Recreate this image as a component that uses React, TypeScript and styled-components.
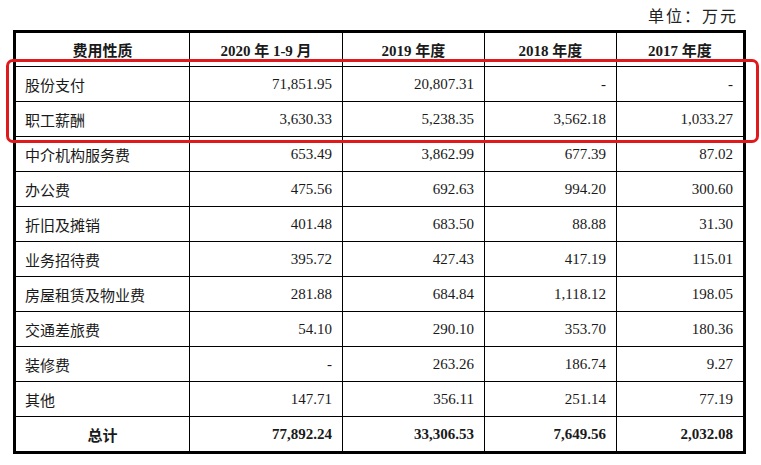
import React from 'react'
import styled, { createGlobalStyle } from 'styled-components'

const GlobalStyle = createGlobalStyle`
  html, body {
    margin: 0;
    padding: 0;
    background: #ffffff;
  }
  body {
    font-family: "Liberation Serif", "Noto Sans CJK SC", serif;
    color: #1a1a1a;
  }
`

const Page = styled.div`
  position: relative;
  width: 761px;
  height: 465px;
  background: #ffffff;
`

const Unit = styled.div`
  height: 30px;
  display: flex;
  align-items: center;
  justify-content: flex-end;
  padding-right: 23px;
  font-size: 16px;
  letter-spacing: 2px;
  color: #222;
`

const Grid = styled.div`
  margin-left: 13px;
  width: 727px;
  display: grid;
  grid-template-columns: 173px 152px 141px 131px 126px;
  grid-template-rows: 33px repeat(11, 34px);
  gap: 1px;
  background: #000;
  border: 3px solid #000;
`

const Cell = styled.div<{ $align?: 'left' | 'right' | 'center'; $bold?: boolean }>`
  background: #fff;
  display: flex;
  align-items: center;
  justify-content: ${(p) =>
    p.$align === 'right' ? 'flex-end' : p.$align === 'center' ? 'center' : 'flex-start'};
  padding: ${(p) => (p.$align === 'right' ? '0 10px 0 0' : p.$align === 'center' ? '0' : '0 0 0 9px')};
  font-size: 15px;
  font-weight: ${(p) => (p.$bold ? 700 : 400)};
  white-space: nowrap;
`

const Highlight = styled.div`
  position: absolute;
  left: 6px;
  top: 59px;
  width: 747px;
  height: 78px;
  border: 3px solid #e0191d;
  border-radius: 7px;
  pointer-events: none;
`

const headers = ['费用性质', '2020 年 1-9 月', '2019 年度', '2018 年度', '2017 年度']

const rows: string[][] = [
  ['股份支付', '71,851.95', '20,807.31', '-', '-'],
  ['职工薪酬', '3,630.33', '5,238.35', '3,562.18', '1,033.27'],
  ['中介机构服务费', '653.49', '3,862.99', '677.39', '87.02'],
  ['办公费', '475.56', '692.63', '994.20', '300.60'],
  ['折旧及摊销', '401.48', '683.50', '88.88', '31.30'],
  ['业务招待费', '395.72', '427.43', '417.19', '115.01'],
  ['房屋租赁及物业费', '281.88', '684.84', '1,118.12', '198.05'],
  ['交通差旅费', '54.10', '290.10', '353.70', '180.36'],
  ['装修费', '-', '263.26', '186.74', '9.27'],
  ['其他', '147.71', '356.11', '251.14', '77.19'],
]

const total = ['总计', '77,892.24', '33,306.53', '7,649.56', '2,032.08']

export default function App() {
  return (
    <Page>
      <GlobalStyle />
      <Unit>单位：万元</Unit>
      <Grid>
        {headers.map((h) => (
          <Cell key={h} $align="center" $bold>
            {h}
          </Cell>
        ))}
        {rows.map((r) =>
          r.map((v, i) => (
            <Cell key={r[0] + i} $align={i === 0 ? 'left' : 'right'}>
              {v}
            </Cell>
          ))
        )}
        {total.map((v, i) => (
          <Cell key={'t' + i} $align={i === 0 ? 'center' : 'right'} $bold>
            {v}
          </Cell>
        ))}
      </Grid>
      <Highlight />
    </Page>
  )
}
